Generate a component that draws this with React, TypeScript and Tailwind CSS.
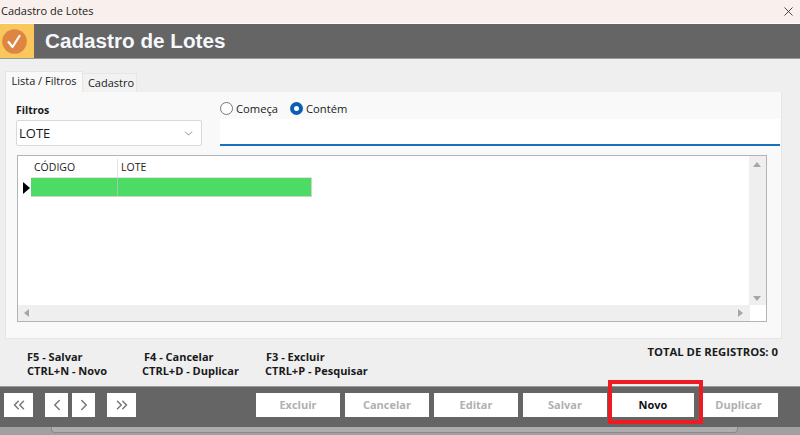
import { ChevronDown, ChevronLeft, ChevronRight, ChevronsLeft, ChevronsRight, X } from "lucide-react";

const actions = [
  { label: "Excluir", width: "w-[84px]" },
  { label: "Cancelar", width: "w-[84px]" },
  { label: "Editar", width: "w-[84px]" },
  { label: "Salvar", width: "w-[84px]" },
  { label: "Novo", width: "w-[82px]", active: true },
  { label: "Duplicar", width: "w-[79px]" },
];

function NavButton({ wide, children }: { wide?: boolean; children: React.ReactNode }) {
  return (
    <button className={`flex h-[24px] items-center justify-center bg-white text-[#777] ${wide ? "w-[29px]" : "w-[23px]"}`}>
      {children}
    </button>
  );
}

function Shortcut({ top, bottom, indent }: { top: string; bottom: string; indent: string }) {
  return (
    <div className="leading-[14px]">
      <div className={indent}>{top}</div>
      <div>{bottom}</div>
    </div>
  );
}

export default function App() {
  return (
    <div className="relative flex h-[435px] w-[800px] flex-col overflow-hidden bg-[#efefef] font-['Open_Sans','Noto_Sans',sans-serif] text-[#1a1a1a]">
      <div className="flex h-[24px] shrink-0 items-center justify-between border-b border-white bg-[#f9efec] pl-[1px] pr-[4px] text-[11px] text-[#222]">
        <span>Cadastro de Lotes</span>
        <X size={15} strokeWidth={1.3} />
      </div>

      <div className="flex h-[35px] shrink-0 items-stretch border-b border-[#999] bg-[#656565]">
        <div className="flex w-[34px] items-center bg-[#f9c75c] pl-[2px]">
          <svg width="25" height="25" viewBox="0 0 25 25">
            <circle cx="12.5" cy="12.5" r="12.3" fill="#de8542" />
            <path d="M6.5 13 L10.5 18 L17.5 7" fill="none" stroke="#fff" strokeWidth="2.2" strokeLinecap="round" strokeLinejoin="round" />
          </svg>
        </div>
        <div className="flex items-center pl-[11px] font-['Liberation_Sans',sans-serif] text-[20.7px] font-bold text-[#f5f8fc]">
          Cadastro de Lotes
        </div>
      </div>

      <div className="flex min-h-0 flex-1 flex-col px-[5px] pt-[12px]">
        <div className="flex h-[21px] items-end text-[11px]">
          <div className="flex h-[21px] w-[78px] items-center justify-center border-t border-r border-l border-[#e6e6e6] bg-[#f9f9f9] pb-[2px]">
            Lista / Filtros
          </div>
          <div className="ml-[1px] flex h-[19px] w-[53px] items-center justify-center border-t border-r border-[#e6e6e6] bg-[#f2f2f2] pl-[2px] pt-[1px]">
            Cadastro
          </div>
        </div>

        <div className="flex h-[247px] w-[777px] flex-col border border-t-0 border-[#e6e6e6] bg-[#f9f9f9] pl-[10px] pr-[1px]">
          <div className="flex h-[54px] items-end">
            <div className="w-[186px]">
              <div className="pb-[1px] text-[10.5px] font-bold leading-[18px]">Filtros</div>
              <div className="flex h-[26px] items-center justify-between rounded-[2px] border border-[#d9d9d9] bg-white pl-[2px] pr-[6px] pt-[1px] text-[13px]">
                <span>LOTE</span>
                <ChevronDown size={13} strokeWidth={1.2} className="text-[#555]" />
              </div>
            </div>
            <div className="ml-[18px] flex-1">
              <div className="flex h-[17px] items-start text-[11.2px]">
                <span className="h-[13px] w-[13px] rounded-full border border-[#777] bg-white" />
                <span className="ml-[3px] leading-[13px]">Começa</span>
                <span className="ml-[12px] h-[13px] w-[13px] rounded-full border-[4px] border-[#0a5fb4] bg-white" />
                <span className="ml-[3px] leading-[13px]">Contém</span>
              </div>
              <div className="h-[27px] border-b-2 border-[#1a6fc0] bg-white" />
            </div>
          </div>

          <div className="ml-[1px] mt-[9px] flex h-[167px] w-[750px] flex-col border border-[#b4b4b8] bg-white">
            <div className="flex min-h-0 flex-1">
              <div className="flex-1">
                <div className="ml-[13px] flex h-[22px] w-[281px] border-b border-[#e3e3e3] pt-[3px] text-[10.5px]">
                  <div className="flex w-[87px] items-center border-r border-[#e3e3e3] pl-[3px]">CÓDIGO</div>
                  <div className="flex flex-1 items-center pl-[3px]">LOTE</div>
                </div>
                <div className="flex h-[19px]">
                  <div className="flex w-[13px] items-center justify-end pr-[1px]">
                    <span className="h-0 w-0 border-y-[6px] border-l-[7px] border-y-transparent border-l-black" />
                  </div>
                  <div className="flex w-[281px] border-b border-r border-[#c4d8c8] bg-[#4cdb65]">
                    <div className="w-[87px] border-r border-[#a8c4ae]" />
                  </div>
                </div>
              </div>
              <div className="flex w-[17px] flex-col items-center justify-between bg-[#efefef] pt-[6px] pb-[4px] pr-[1px]">
                <span className="h-0 w-0 border-x-[4px] border-b-[5px] border-x-transparent border-b-[#a6a6a6]" />
                <span className="h-0 w-0 border-x-[4px] border-t-[5px] border-x-transparent border-t-[#a6a6a6]" />
              </div>
            </div>
            <div className="flex h-[16px] w-[732px] items-center justify-between bg-[#efefef] pl-[6px] pr-[7px]">
              <span className="h-0 w-0 border-y-[4px] border-r-[5px] border-y-transparent border-r-[#a6a6a6]" />
              <span className="h-0 w-0 border-y-[4px] border-l-[5px] border-y-transparent border-l-[#a6a6a6]" />
            </div>
          </div>
        </div>

        <div className="flex flex-1 justify-between pl-[22px] pr-[17px] font-bold">
          <div className="flex pt-[11px] text-[11px]">
            <div className="w-[115px]">
              <Shortcut top="F5 - Salvar" bottom="CTRL+N - Novo" indent="" />
            </div>
            <div className="w-[123px]">
              <Shortcut top="F4 - Cancelar" bottom="CTRL+D - Duplicar" indent="pl-[2px]" />
            </div>
            <Shortcut top="F3 - Excluir" bottom="CTRL+P - Pesquisar" indent="pl-[1px]" />
          </div>
          <div className="pt-[5px] text-[11.3px]">TOTAL DE REGISTROS: 0</div>
        </div>
      </div>

      <div className="flex h-[41px] shrink-0 items-start border-t border-[#999] bg-[#656565] pl-[4px] pt-[6px]">
        <NavButton wide><ChevronsLeft size={18} strokeWidth={2} /></NavButton>
        <div className="ml-[12px]"><NavButton><ChevronLeft size={18} strokeWidth={2} /></NavButton></div>
        <div className="ml-[4px]"><NavButton><ChevronRight size={18} strokeWidth={2} /></NavButton></div>
        <div className="ml-[12px]"><NavButton wide><ChevronsRight size={18} strokeWidth={2} /></NavButton></div>
        <div className="ml-[120px] flex gap-[5px]">
          {actions.map((a) => (
            <button
              key={a.label}
              className={`flex h-[24px] items-center justify-center bg-white text-[11px] font-bold ${a.width} ${a.active ? "text-[#111]" : "text-[#b0b0b0]"}`}
            >
              {a.label}
            </button>
          ))}
        </div>
      </div>

      <div className="h-[8px] shrink-0 bg-[#a0a0a0] pl-[51px] pr-[62px]">
        <div className="h-[6px] rounded-b-[4px] border-x border-b border-[#8a8a8a] bg-[#adadad]" />
      </div>

      <div className="absolute left-[608px] top-[380px] h-[44px] w-[95px] border-[4px] border-[#ed1c24]" />
    </div>
  );
}
